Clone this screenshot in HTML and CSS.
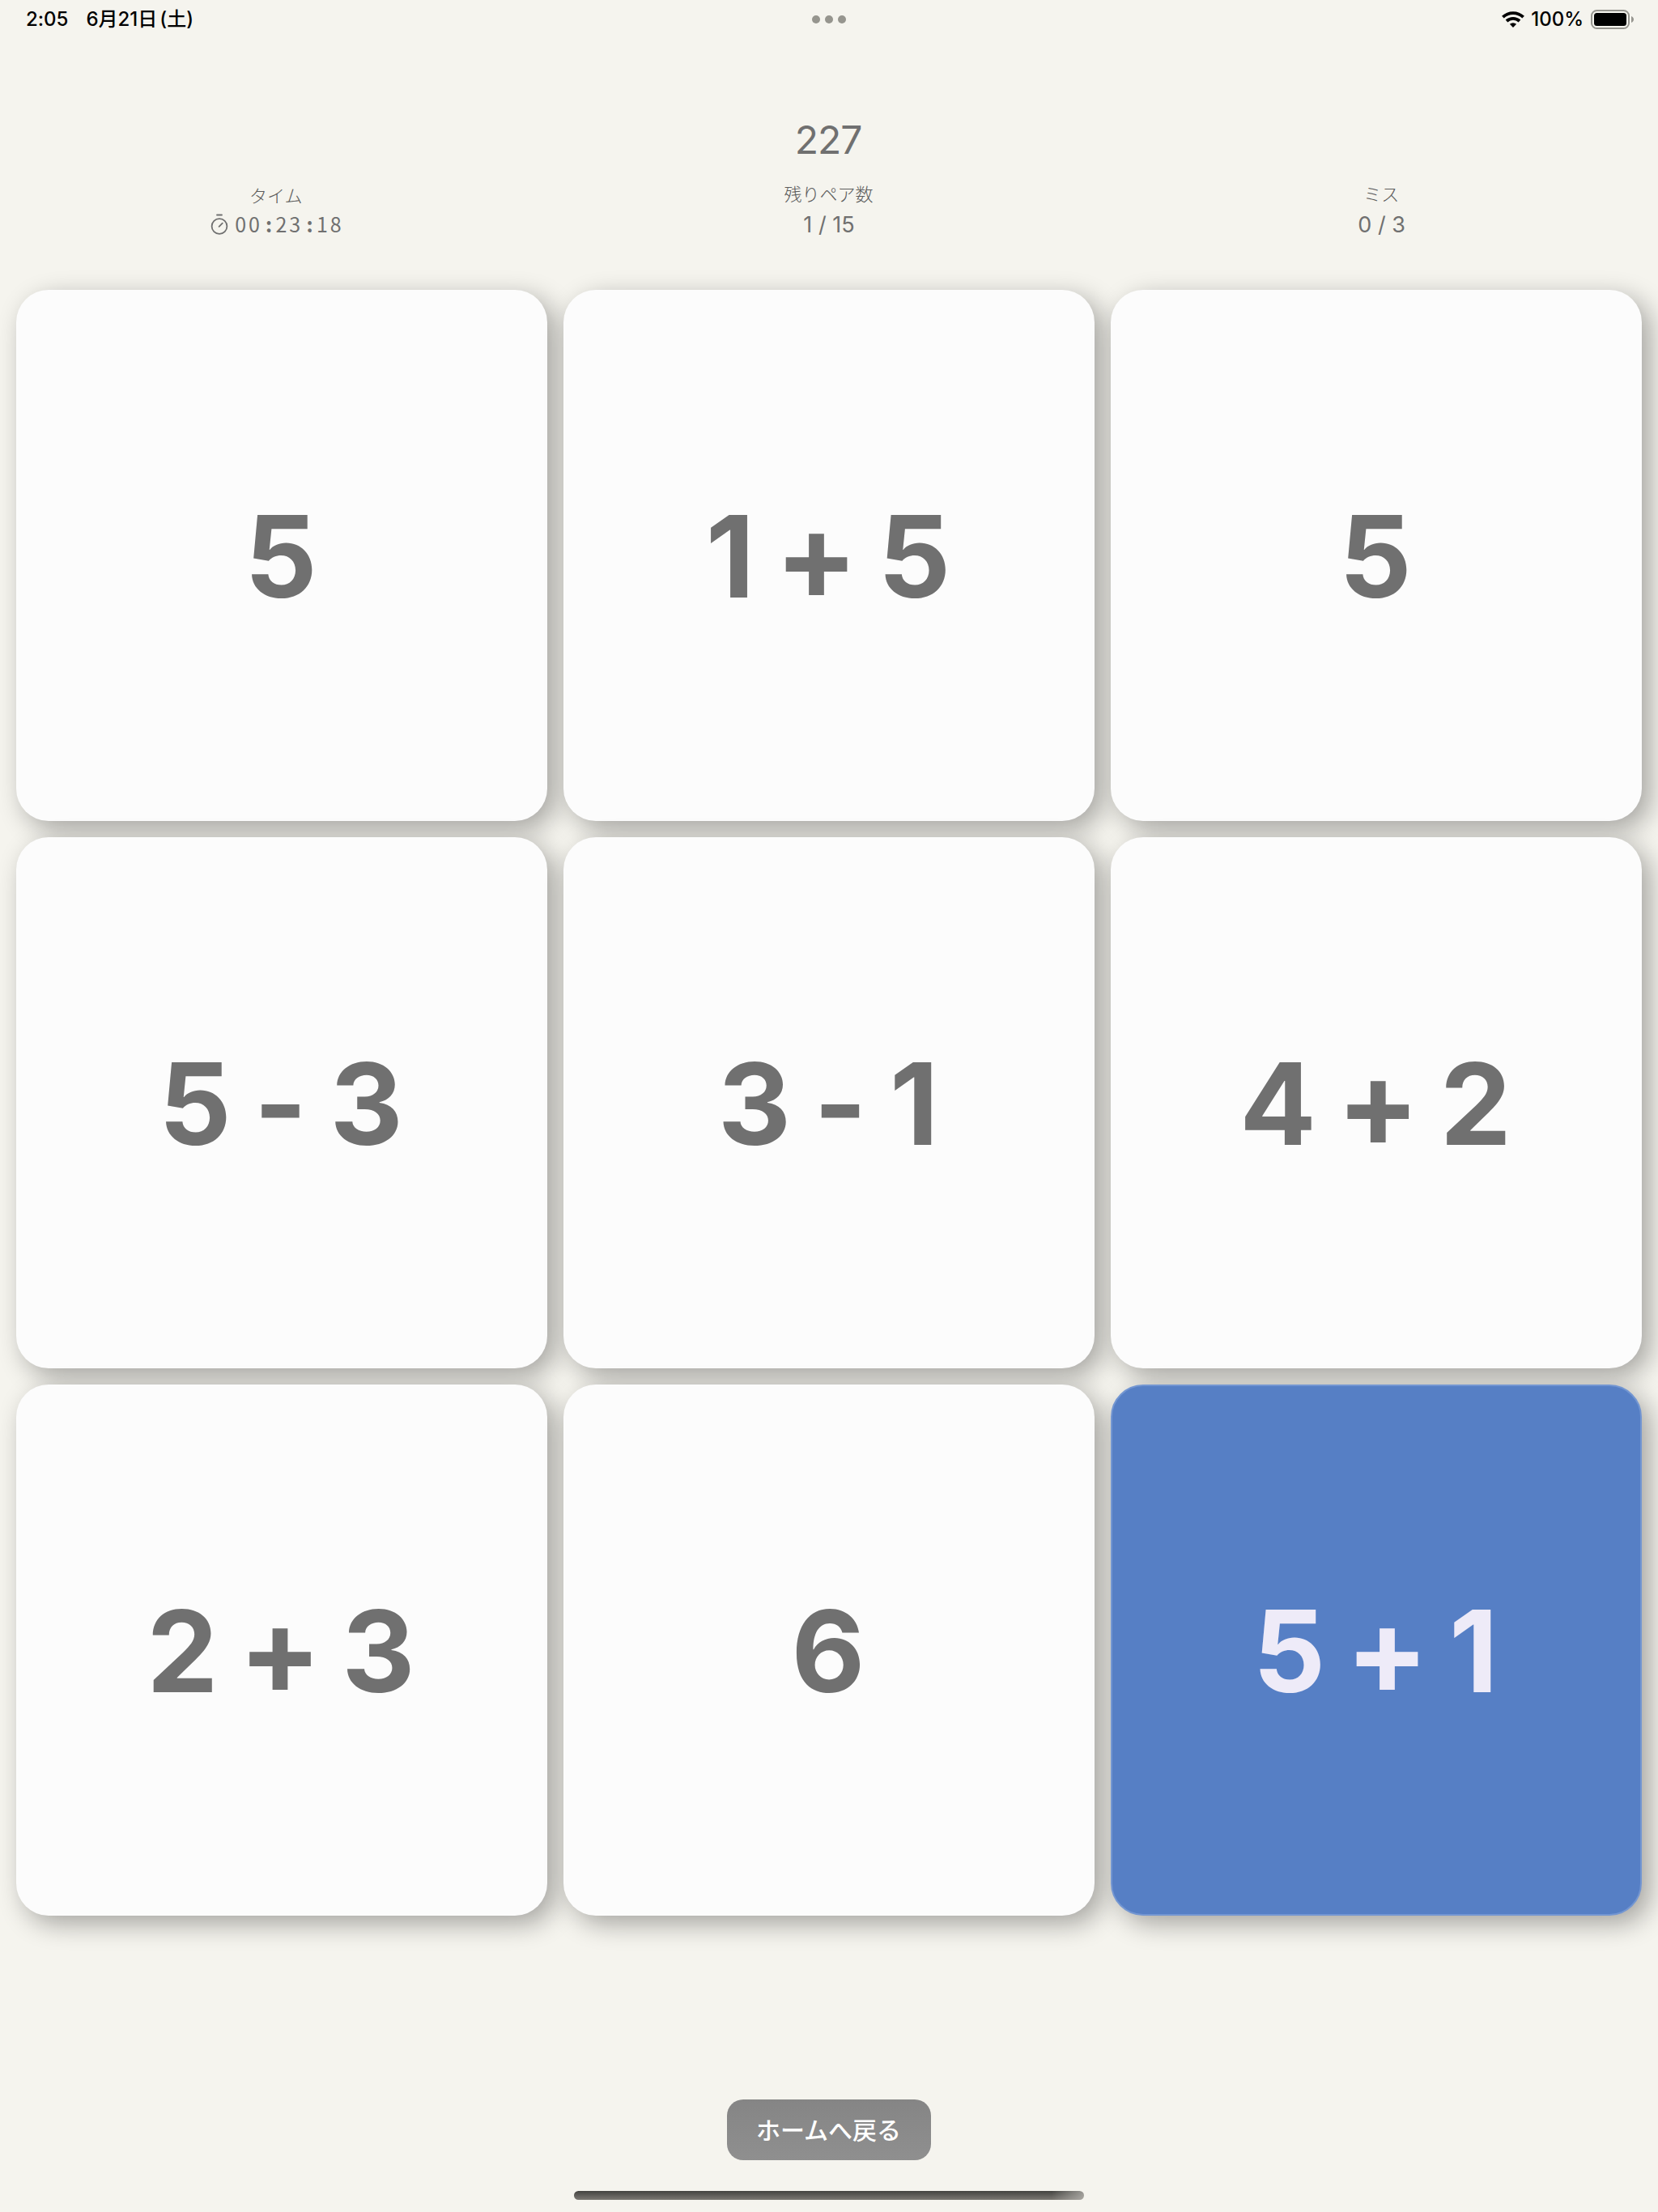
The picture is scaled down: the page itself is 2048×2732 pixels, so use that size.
FILE: index.html
```html
<!DOCTYPE html>
<html lang="ja">
<head>
    <meta charset="UTF-8">
    <meta name="viewport" content="width=device-width, initial-scale=1.0">
    <title>ペア計算ゲーム</title>
    <link rel="stylesheet" href="styles.css">
</head>
<body>
    <div class="status-bar">
        <div class="status-left">
            <span class="clock">2:05</span>
            <span class="date">6月21日<span class="weekday">(土)</span></span>
        </div>
        <div class="dots"><i></i><i></i><i></i></div>
        <div class="status-right">
            <svg class="wifi" viewBox="0 0 28 20" width="28" height="20">
                <g fill="none" stroke="#000" stroke-width="3.8">
                    <path d="M1.4 7.2a18 18 0 0 1 25.2 0"/>
                    <path d="M6 12a11.6 11.6 0 0 1 16 0"/>
                </g>
                <path d="M14 20l-4.1-4.2a6 6 0 0 1 8.2 0z"/>
            </svg>
            <span class="percent">100%</span>
            <svg class="battery" viewBox="0 0 54 24" width="54" height="24">
                <rect x="1" y="1" width="46" height="22" rx="6.5" fill="none" stroke="#96958f" stroke-width="2"/>
                <rect x="4" y="4" width="40" height="16" rx="3.5"/>
                <path d="M50 8c4 1.500 4 6.500 0 8z" fill="#96958f"/>
            </svg>
        </div>
    </div>

    <header class="game-header">
        <div class="score">227</div>
        <div class="stats">
            <div class="stat stat-time">
                <div class="stat-label">タイム</div>
                <div class="timer">
                    <svg viewBox="0 0 22 26" width="22" height="26" fill="none" stroke="#707070" stroke-width="1.800">
                        <circle cx="11" cy="15.500" r="9.400"/>
                        <path d="M8 1.500h6M10.600 15.800l4.200-4.200" stroke-linecap="round"/>
                    </svg>
                    <span class="timer-value">00<b>:</b>23<b>:</b>18</span>
                </div>
            </div>
            <div class="stat">
                <div class="stat-label">残りペア数</div>
                <div class="stat-value">1 / 15</div>
            </div>
            <div class="stat">
                <div class="stat-label">ミス</div>
                <div class="stat-value">0 / 3</div>
            </div>
        </div>
    </header>

    <main class="board">
        <div class="card">5</div>
        <div class="card">1 <span class="plus">+</span> 5</div>
        <div class="card">5</div>
        <div class="card">5 - 3</div>
        <div class="card">3 - 1</div>
        <div class="card">4 <span class="plus">+</span> 2</div>
        <div class="card">2 <span class="plus">+</span> 3</div>
        <div class="card">6</div>
        <div class="card selected">5 <span class="plus">+</span> 1</div>
    </main>

    <footer class="footer">
        <button type="button" class="home-btn">ホームへ戻る</button>
        <div class="home-indicator"></div>
    </footer>
</body>
</html>
```
FILE: styles.css
```css
* {
    box-sizing: border-box;
}

body {
    margin: 0;
    width: 2048px;
    height: 2732px;
    overflow: hidden;
    background-color: #f5f4ee;
    color: #707070;
    font-family: Inter, "Noto Sans CJK JP", sans-serif;
    font-feature-settings: "calt" 0;
}

/* status bar */
.status-bar {
    display: grid;
    grid-template-columns: 1fr auto 1fr;
    align-items: center;
    height: 48px;
    padding: 0 31px 0 31px;
    color: #000;
    font-size: 24px;
    font-weight: 500;
    line-height: 48px;
}

.status-left {
    display: flex;
    gap: 22px;
    padding-left: 1px;
}

.weekday {
    margin-left: 3px;
}

.dots {
    display: flex;
    gap: 6px;
}

.dots i {
    width: 10px;
    height: 10px;
    border-radius: 50%;
    background-color: #96958e;
}

.status-right {
    display: flex;
    justify-content: flex-end;
    align-items: center;
}

.battery {
    margin-right: -2px;
}

.percent {
    margin: 0 9px 0 8px;
}

/* score and stats */
.game-header {
    height: 310px;
    padding-top: 96px;
    text-align: center;
}

.score {
    padding-right: 2px;
    font-size: 48px;
    line-height: 58px;
    letter-spacing: -1px;
}

.stats {
    display: grid;
    grid-template-columns: repeat(3, 1fr);
    padding-top: 22px;
}

.stat-label {
    height: 33px;
    padding-right: 1px;
    color: #5c5c5c;
    font-size: 22px;
    font-weight: 300;
    line-height: 32px;
}

.stat-value {
    font-size: 27px;
    line-height: 42px;
}

.stat-time {
    padding-top: 2px;
}

.timer {
    display: flex;
    justify-content: center;
    align-items: center;
    gap: 8px;
    height: 36px;
    padding-left: 2px;
}

.timer-value {
    font-family: "Noto Sans CJK JP", sans-serif;
    font-size: 25px;
    line-height: 34px;
    height: 36px;
    letter-spacing: 2.9px;
}

.timer-value b {
    display: inline-block;
    width: 16.8px;
    text-align: center;
    letter-spacing: 0;
}

/* cards */
.board {
    display: grid;
    grid-template-columns: repeat(3, 656px);
    grid-auto-rows: 656px;
    gap: 20px;
    padding: 0 20px;
}

.card {
    padding: 1px 2px 0 0;
    border-radius: 40px;
    background-color: #fcfcfc;
    box-shadow: 10px 10px 32px rgba(0, 0, 0, 0.33);
    font-size: 140px;
    font-weight: 700;
    line-height: 656px;
    text-align: center;
    white-space: nowrap;
    word-spacing: -5px;
}

.card .plus {
    margin: 0 -3px;
    font-size: 151px;
    line-height: 0;
    vertical-align: -3px;
}

.card.selected {
    padding-top: 0;
    border: 2px solid #7396d2;
    background-color: #567fc5;
    color: #eeebf8;
    line-height: 654px;
}

/* footer */
.footer {
    display: flex;
    flex-direction: column;
    align-items: center;
    padding-top: 227px;
}

.home-btn {
    width: 252px;
    height: 75px;
    padding: 0 1px 3px 0;
    border: none;
    border-radius: 20px;
    background: linear-gradient(#858585, #8f8f8f);
    color: #fff;
    font-family: "Noto Sans CJK JP", sans-serif;
    font-size: 30px;
    font-weight: 500;
}

.home-indicator {
    width: 630px;
    height: 11px;
    margin-top: 38px;
    border-radius: 6px;
    background: linear-gradient(90deg, transparent 590px, rgba(190, 188, 183, 0.7) 630px), linear-gradient(#434340, #7b7873);
}
```
